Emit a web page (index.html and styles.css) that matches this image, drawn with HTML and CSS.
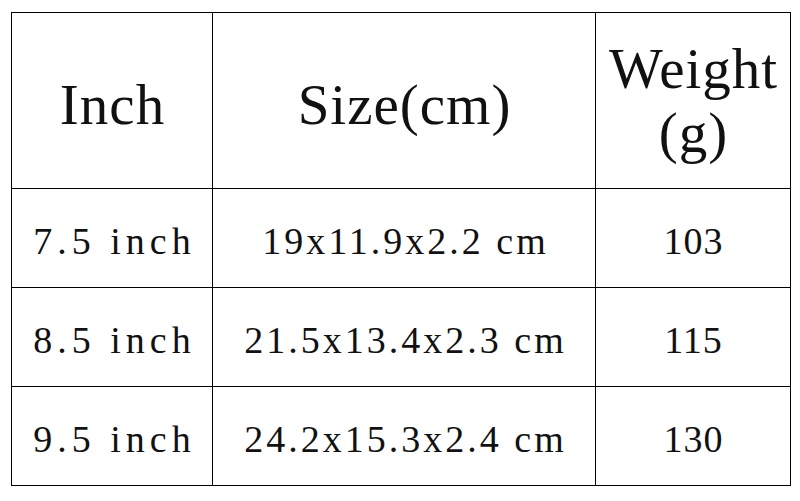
FILE: index.html
```html
<!DOCTYPE html>
<html lang="en">
<head>
<meta charset="utf-8">
<title>Size chart</title>
<link rel="stylesheet" href="styles.css">
</head>
<body>
<div class="chart" role="table">
  <div class="cell head single" role="columnheader">Inch</div>
  <div class="cell head single" role="columnheader">Size(cm)</div>
  <div class="cell head" role="columnheader">Weight<br>(g)</div>

  <div class="cell body inch" role="cell">7.5 inch</div>
  <div class="cell body size" role="cell">19x11.9x2.2 cm</div>
  <div class="cell body" role="cell">103</div>

  <div class="cell body inch" role="cell">8.5 inch</div>
  <div class="cell body size" role="cell">21.5x13.4x2.3 cm</div>
  <div class="cell body" role="cell">115</div>

  <div class="cell body inch" role="cell">9.5 inch</div>
  <div class="cell body size" role="cell">24.2x15.3x2.4 cm</div>
  <div class="cell body" role="cell">130</div>
</div>
</body>
</html>
```
FILE: styles.css
```css
html, body {
  margin: 0;
  background: #fff;
}
body {
  padding: 12px 0 0 11px;
  font-family: "Liberation Serif", "Times New Roman", serif;
  color: #111;
}
.chart {
  display: grid;
  grid-template-columns: 200px 382px 194px;
  grid-template-rows: 175px 98px 98px 98px;
  gap: 1px;
  padding: 1px;
  background: #000;
  width: max-content;
}
.cell {
  background: #fff;
  display: flex;
  align-items: center;
  justify-content: center;
  text-align: center;
  white-space: nowrap;
}
.head {
  font-size: 57px;
  line-height: 64px;
  letter-spacing: 1px;
  padding-left: 1px;
}
.head.single {
  padding-top: 8px;
}
.body {
  font-size: 38px;
  line-height: 44px;
  letter-spacing: 1px;
  padding-top: 5px;
  padding-left: 1px;
}
.body.inch {
  letter-spacing: 5px;
  padding-left: 5px;
}
.body.size {
  letter-spacing: 3px;
  padding-left: 3px;
}
```
